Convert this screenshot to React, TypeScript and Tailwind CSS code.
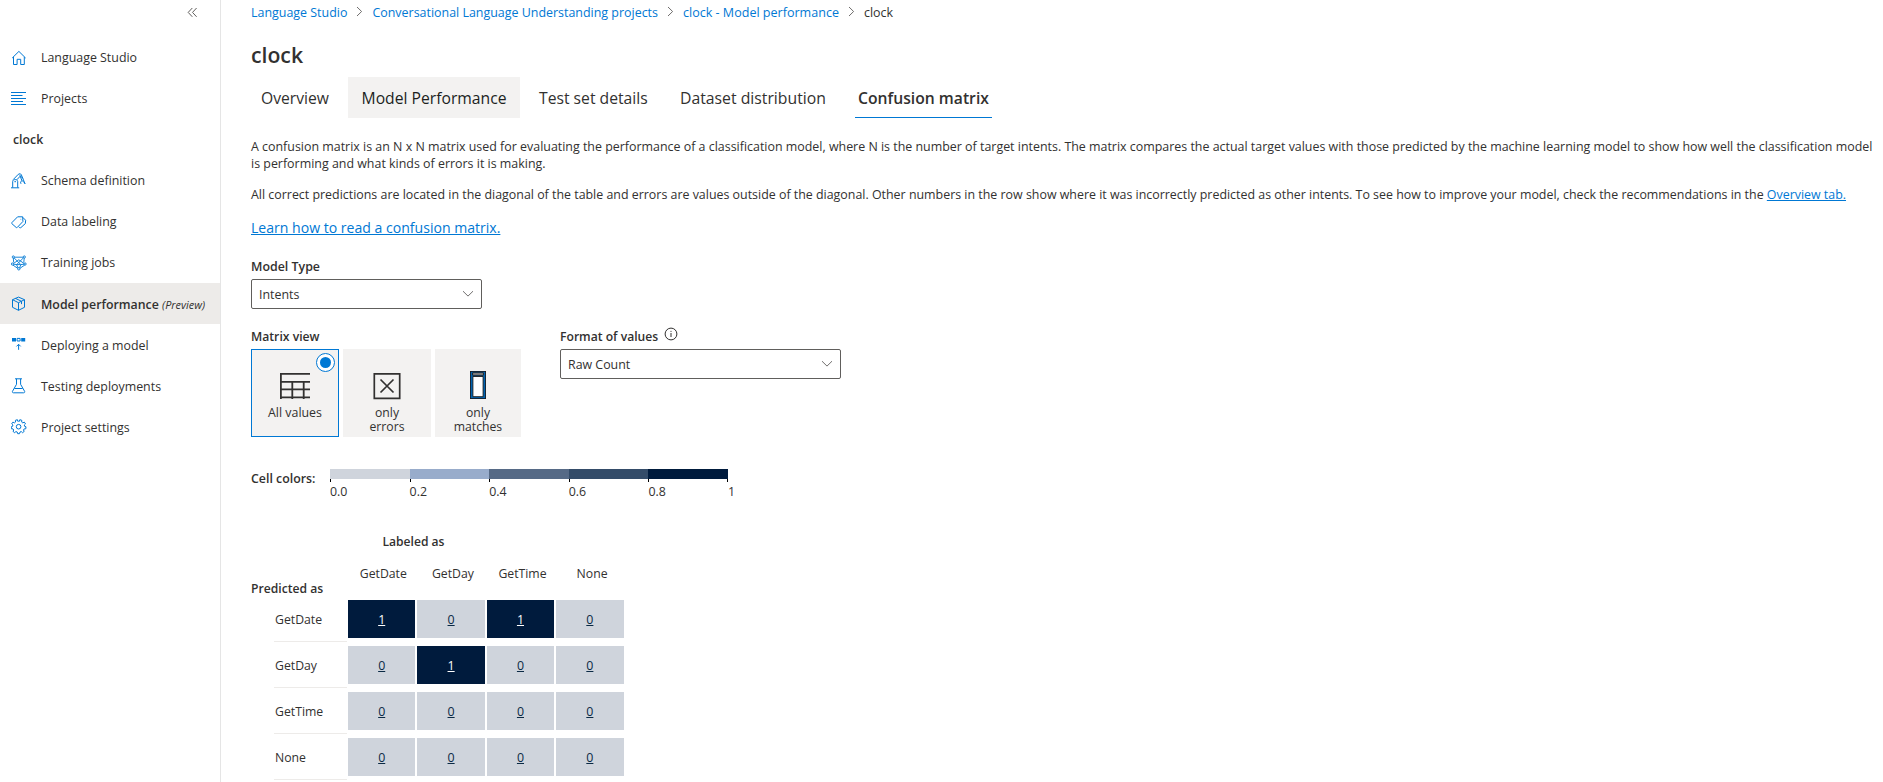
import React from "react";

const svgProps = {
  width: 16,
  height: 16,
  viewBox: "0 0 16 16",
  fill: "none",
  stroke: "#0078d4",
  strokeWidth: 1,
} as const;

const HomeIcon = () => (
  <svg {...svgProps}>
    <path d="M1.2 8 7.9 1.4 14.6 8M2.5 7v7.5h3.6V9.3h3.6v5.2h3.6V7" />
  </svg>
);

const ListIcon = () => (
  <svg {...svgProps}>
    <path d="M0 1.5h15M0 4.5h11.5M0 7.5h15M0 10.5h12M0 13.5h15" />
  </svg>
);

const ArmIcon = () => (
  <svg {...svgProps}>
    <path d="M0 14.8h8.2M1.7 14.6V8.4c0-2.4 5-2.4 5 0v6.2M2.2 6.6 7.3 1.3c1-.9 2.4-.7 3 .4L14 10.8M5.8 6.8l3.4-3.6 1.7 4.4M10.9 7.6c-1.4.8-1.6 2-.9 3.2M10.9 7.6c1 .6 2.6 1.6 3.1 3.2M8.2 1.6l3.5 3.7M3.4 8.7h1.6" />
  </svg>
);

const TagIcon = () => (
  <svg {...svgProps}>
    <path d="m.9 8.6 5.7-5.8h5.1l.2 4.7-5.6 5.9a.9.9 0 0 1-1.2 0L.9 9.7a.8.8 0 0 1 0-1.1ZM11.8 3.4l2.8 2.8-.2 3.3-4.5 4.1c-.8.4-1.7 0-2.2-.8" />
    <path d="M9.6 5.3h.6" />
  </svg>
);

const TrainingIcon = () => (
  <svg {...svgProps} strokeWidth={0.9}>
    <path d="M3.2 2.2h9.2M2.3 3l.4 4.5M13.2 3l-.4 4.5M3 2.8l6.6 6.6M12.5 2.8 5.9 9.4M2.3 8.6l5.5-3.8 5.4 3.8M1.8 10l5 3.4M13.8 10l-5 3.4M2.3 9.2l3.7.4h3.5l3.7-.4M5.6 9.8l1.6 3.4M9.9 9.8l-1.6 3.4" />
    <circle cx="2.3" cy="2" r="1.1" fill="#fff" />
    <circle cx="13.3" cy="2" r="1.1" fill="#fff" />
    <circle cx="1.4" cy="9" r="1.1" fill="#fff" />
    <circle cx="14.1" cy="9" r="1.1" fill="#fff" />
    <circle cx="7.8" cy="13.8" r="1.2" fill="#fff" />
  </svg>
);

const CubeIcon = () => (
  <svg {...svgProps}>
    <path d="m7.5 1.1 6 2.6v7.6l-6 3-6-3V3.7zM1.5 3.7l6 3 6-3M7.5 6.7v7.6M4.5 2.4l6 2.9v2.8" />
  </svg>
);

const DeployIcon = () => (
  <svg {...svgProps}>
    <path d="M1 .9h4v3.6H1zM10.2.9h4v3.6h-4z" fill="#0078d4" stroke="none" />
    <path d="M6.1 1.4h3V4h-3zM7.6 12.8V7.3M5.5 9.4l2.1-2.1 2.1 2.1" />
  </svg>
);

const FlaskIcon = () => (
  <svg {...svgProps}>
    <path d="M4 .8h7M5.5.8v5.5l-4 7c-.4.8 0 1.5.9 1.5h10.3c.9 0 1.3-.7.9-1.5l-4-7V.8M3.4 10.5h8.2" />
  </svg>
);

const GearIcon = () => (
  <svg {...svgProps}>
    <circle cx="7.6" cy="7.7" r="2.3" />
    <path
      transform="translate(0 -.3)"
      d="m6.4 1 .4 1.6a5.5 5.5 0 0 1 1.6 0L8.8 1l2 .6-.1 1.8 1.1.8 1.5-.8 1.2 1.8-1.2 1.1.3 1.3 1.4.5-.2 2-1.6.1-.7 1.1.7 1.4-1.7 1.3-1.2-1.1-1.3.4L8.5 15H6.7l-.5-1.7-1.3-.4L3.7 14 2 12.7l.7-1.4-.7-1.1-1.6-.1-.2-2 1.4-.5.3-1.3L.7 5.2l1.2-1.8 1.5.8 1.1-.8-.1-1.8z"
    />
  </svg>
);

type NavItem = { label: string; icon?: React.ReactNode; active?: boolean };

const navItems: NavItem[] = [
  { label: "Language Studio", icon: <HomeIcon /> },
  { label: "Projects", icon: <ListIcon /> },
  { label: "clock" },
  { label: "Schema definition", icon: <ArmIcon /> },
  { label: "Data labeling", icon: <TagIcon /> },
  { label: "Training jobs", icon: <TrainingIcon /> },
  { label: "Model performance", icon: <CubeIcon />, active: true },
  { label: "Deploying a model", icon: <DeployIcon /> },
  { label: "Testing deployments", icon: <FlaskIcon /> },
  { label: "Project settings", icon: <GearIcon /> },
];

function Sidebar() {
  return (
    <nav className="w-[221px] shrink-0 border-r border-[#e5e5e5]">
      <div className="flex h-[37px] justify-end pt-[7px] pr-[22px]">
        <svg width="11" height="11" viewBox="0 0 11 11" fill="none" stroke="#605e5c" strokeWidth="1">
          <path d="M5.3 1 1.2 5.4l4.1 4.4M9.6 1 5.5 5.4l4.1 4.4" />
        </svg>
      </div>
      {navItems.map((item, i) =>
        item.icon ? (
          <div
            key={item.label}
            className={`flex h-[41px] items-center pl-[11px] ${item.active ? "bg-[#edebe9]" : ""}`}
          >
            <span className="mr-[14px] w-4 shrink-0">{item.icon}</span>
            {item.active ? (
              <span className="pt-[2px] text-[12.35px] font-semibold whitespace-nowrap">
                {item.label} <span className="text-[10.9px] font-normal italic">(Preview)</span>
              </span>
            ) : (
              <span className={i > 6 ? "pt-[2px]" : ""}>{item.label}</span>
            )}
          </div>
        ) : (
          <div key={item.label} className="flex h-[41px] items-center pl-[13px] text-[12.3px] font-semibold">
            {item.label}
          </div>
        ),
      )}
    </nav>
  );
}

const Sep = () => (
  <svg width="7" height="11" viewBox="0 0 7 11" fill="none" stroke="#605e5c" strokeWidth="0.9" className="ml-[9px] mr-[9px] -mt-px">
    <path d="m1 1 4.6 4.5L1 10" />
  </svg>
);

function Dropdown({ value, className }: { value: string; className: string }) {
  return (
    <div
      className={`flex h-[30px] items-center justify-between rounded-[2px] border border-[#605e5c] pr-[7px] pl-[7px] ${className}`}
    >
      <span>{value}</span>
      <svg width="12" height="8" viewBox="0 0 12 8" fill="none" stroke="#605e5c" strokeWidth="0.9" className="-mt-px">
        <path d="m1 1.2 5 4.9 5-4.9" />
      </svg>
    </div>
  );
}

const GridIcon = () => (
  <svg width="32" height="28" viewBox="0 0 32 28" fill="none" stroke="#323130" strokeWidth="1.8">
    <path d="M31 1.9H1.9V27M1 9.9h30M1 17.4h30M1 25.4h30M13.3 9.9V27M24.7 9.9V27" />
  </svg>
);

const ErrorsIcon = () => (
  <svg width="28" height="28" viewBox="0 0 28 28" fill="none" stroke="#323130" strokeWidth="1.7">
    <path d="M1.3 1.8h25.4v24.6H1.3z" />
    <path d="m7.5 7.5 13 13M20.5 7.5l-13 13" />
  </svg>
);

const MatchesIcon = () => (
  <svg width="16" height="28" viewBox="0 0 16 28">
    <path d="M0 0h16v28H0z" fill="#1b1a19" />
    <path d="M.8.8h14.4v26.4H.8z" fill="#0063b1" />
    <path d="M2.6 1.8h10.8v2.4H2.6z" fill="#a19f9d" stroke="#1b1a19" strokeWidth="0.9" />
    <path d="M2.9 5.5h10.2v20.2H2.9z" fill="#fff" stroke="#1b1a19" strokeWidth="0.9" />
  </svg>
);

const legend = [
  { from: "0.0", color: "bg-[#cfd4dc]" },
  { from: "0.2", color: "bg-[#98accb]" },
  { from: "0.4", color: "bg-[#566a86]" },
  { from: "0.6", color: "bg-[#344c69]" },
  { from: "0.8", color: "bg-[#001b3d]" },
];

const intents = ["GetDate", "GetDay", "GetTime", "None"];
const matrix = [
  [1, 0, 1, 0],
  [0, 1, 0, 0],
  [0, 0, 0, 0],
  [0, 0, 0, 0],
];

export default function App() {
  return (
    <div className="flex h-[782px] w-[1883px] overflow-hidden bg-white font-['Open_Sans','Noto_Sans',sans-serif] text-[12.4px] leading-[17px] text-[#323130]">
      <Sidebar />
      <main className="flex-1 pl-[30px]">
        <div className="flex h-6 items-center text-[12.45px] text-[#0078d4]">
          <span>Language Studio</span>
          <Sep />
          <span>Conversational Language Understanding projects</span>
          <Sep />
          <span className="text-[12.55px]">clock - Model performance</span>
          <Sep />
          <span className="text-[#323130]">clock</span>
        </div>

        <h1 className="mt-[17px] h-7 text-[21.2px] leading-7 font-semibold">clock</h1>

        <div className="mt-2 flex h-[41px] items-stretch text-[15.7px] leading-[43px] whitespace-nowrap">
          <div className="w-[97px] pl-[10px]">Overview</div>
          <div className="w-[172px] bg-[#f3f2f1] text-center text-[#201f1e]">Model Performance</div>
          <div className="w-[160px] pl-[19px]">Test set details</div>
          <div className="w-[175px] text-[15.78px]">Dataset distribution</div>
          <div className="w-[137px] border-b border-[#0078d4] text-center font-semibold">Confusion matrix</div>
        </div>

        <p className="mt-5 text-[12.435px] whitespace-nowrap">
          A confusion matrix is an N x N matrix used for evaluating the performance of a classification model, where N is
          the number of target intents. The matrix compares the actual target values with those predicted by the machine
          learning model to show how well the classification model
          <br />
          is performing and what kinds of errors it is making.
        </p>
        <p className="mt-[14px] text-[12.42px] whitespace-nowrap">
          All correct predictions are located in the diagonal of the table and errors are values outside of the diagonal.
          Other numbers in the row show where it was incorrectly predicted as other intents. To see how to improve your
          model, check the recommendations in the <a className="text-[#0078d4] underline">Overview tab.</a>
        </p>
        <div className="mt-4 text-[14.07px] text-[#0078d4] underline">Learn how to read a confusion matrix.</div>

        <div className="mt-[22px] mb-1 text-[12.4px] font-semibold">Model Type</div>
        <Dropdown value="Intents" className="w-[231px]" />

        <div className="mt-[19px] flex">
          <div className="w-[309px]">
            <div className="mb-[4px] text-[12.2px] font-semibold">Matrix view</div>
            <div className="flex gap-1 text-center leading-[14px]">
              <div className="relative flex h-[88px] w-[88px] flex-col items-center border border-[#0078d4] bg-[#f3f2f1] pt-[22px]">
                <GridIcon />
                <span className="mt-[6px]">All values</span>
                <span className="absolute top-[3px] right-[3px] flex size-[19px] items-center justify-center rounded-full border border-[#0078d4] bg-white">
                  <span className="size-[11px] rounded-full bg-[#0078d4]" />
                </span>
              </div>
              <div className="flex h-[88px] w-[88px] flex-col items-center bg-[#f3f2f1] pt-[23px]">
                <ErrorsIcon />
                <span className="mt-[6px] text-[12.2px]">
                  only
                  <br />
                  errors
                </span>
              </div>
              <div className="flex h-[88px] w-[86px] flex-col items-center bg-[#f3f2f1] pt-[22px]">
                <MatchesIcon />
                <span className="mt-[7px] text-[12.2px]">
                  only
                  <br />
                  matches
                </span>
              </div>
            </div>
          </div>
          <div>
            <div className="mb-[4px] flex h-[17px] text-[12.15px] font-semibold">
              Format of values
              <svg width="14" height="14" viewBox="0 0 14 14" fill="none" stroke="#323130" className="-mt-px ml-[6px]">
                <circle cx="7" cy="7" r="5.9" strokeWidth="1" />
                <path d="M7 6v4M7 3.9v1" strokeWidth="1" />
              </svg>
            </div>
            <Dropdown value="Raw Count" className="w-[281px]" />
          </div>
        </div>

        <div className="mt-8 flex">
          <div className="w-[79px] pt-px text-[12.35px] font-semibold">Cell colors:</div>
          <div className="flex">
            {legend.map((s) => (
              <div key={s.from} className="w-[79.6px]">
                <div className={`h-[10px] ${s.color}`} />
                <div className="h-[3px] w-px bg-black" />
                <div className="mt-px">{s.from}</div>
              </div>
            ))}
            <div className="-ml-px">
              <div className="h-[10px]" />
              <div className="h-[3px] w-px bg-black" />
              <div className="mt-px ml-px">1</div>
            </div>
          </div>
        </div>

        <div className="mt-[33px] pl-[131.5px] text-[12.1px] font-semibold">Labeled as</div>
        <div className="mt-[15px] flex h-[17px] pl-[97px] text-[12.25px]">
          {intents.map((name) => (
            <div key={name} className="mr-[2px] w-[67.6px] pl-[3px] text-center">
              {name}
            </div>
          ))}
        </div>
        <div className="-mt-[2px] h-[19px] text-[12.15px] font-semibold">Predicted as</div>

        <div className="mt-px">
          {matrix.map((row, r) => (
            <div key={intents[r]} className="flex h-[46px] pl-[23px]">
              <div className="mr-px h-[42px] w-[73px] border-b border-[#edebe9] pl-px text-[12.25px] leading-[39px]">
                {intents[r]}
              </div>
              {row.map((v, c) => (
                <div
                  key={c}
                  className={`mr-[2px] h-[38px] w-[67.4px] text-center leading-[39px] underline ${
                    v ? "bg-[#001b3d] text-white" : "bg-[#cfd4dc] text-[#0b2a45]"
                  }`}
                >
                  {v}
                </div>
              ))}
            </div>
          ))}
        </div>
      </main>
    </div>
  );
}
